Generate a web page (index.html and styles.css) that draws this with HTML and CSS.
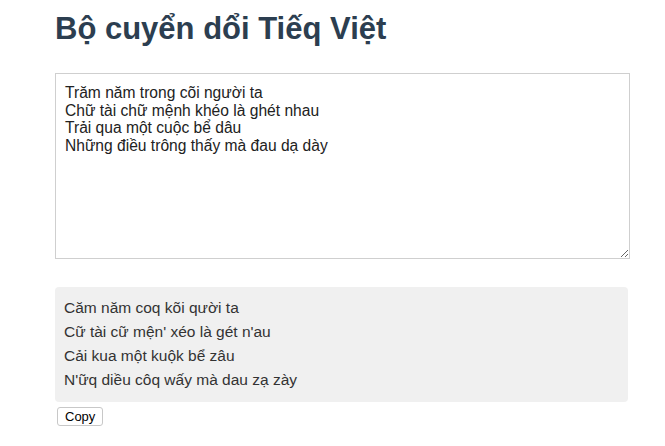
FILE: index.html
```html
<!DOCTYPE html>
<html lang="vi">
<head>
<meta charset="utf-8">
<title>Bộ cuyển dổi Tiếq Việt</title>
<link rel="stylesheet" href="styles.css">
</head>
<body>
<main class="page">
  <h1 class="title">Bộ cuyển dổi Tiếq Việt</h1>
  <textarea class="input" spellcheck="false">Trăm năm trong cõi người ta
Chữ tài chữ mệnh khéo là ghét nhau
Trải qua một cuộc bể dâu
Những điều trông thấy mà đau dạ dày</textarea>
  <div class="output">
    <p class="line">Căm năm coq kõi qười ta</p>
    <p class="line">Cữ tài cữ mện' xéo là gét n'au</p>
    <p class="line">Cải kua một kuộk bể zâu</p>
    <p class="line">N'ữq diều côq wấy mà dau zạ zày</p>
  </div>
  <button class="copy" type="button">Copy</button>
</main>
</body>
</html>
```
FILE: styles.css
```css
html, body {
  margin: 0;
  padding: 0;
  background: #fff;
}
body {
  font-family: "Liberation Sans", Arial, sans-serif;
}
.page {
  width: 575px;
  padding: 0 0 0 55px;
  display: flex;
  flex-direction: column;
  align-items: flex-start;
}
.title {
  margin: 10px 0 0 0;
  font-size: 31px;
  line-height: 38px;
  font-weight: bold;
  color: #2c3e50;
}
.input {
  box-sizing: border-box;
  width: 575px;
  height: 186px;
  margin-top: 25px;
  padding: 10px 9px;
  border: 1px solid #cfcfcf;
  font-family: "Liberation Sans", Arial, sans-serif;
  font-size: 15.6px;
  line-height: 17.5px;
  color: #222;
  resize: vertical;
  outline: none;
}
.output {
  box-sizing: border-box;
  width: 573px;
  margin-top: 28px;
  padding: 9px 9px 10px;
  background: #f0f0f0;
  border-radius: 4px;
  color: #333;
  font-size: 15.5px;
}
.line {
  margin: 0;
  line-height: 24px;
}
.copy {
  margin: 5px 0 0 2px;
  padding: 1px 7px;
  height: 19px;
  font-family: "Liberation Sans", Arial, sans-serif;
  font-size: 13px;
  color: #000;
  background: #fff;
  border: 1px solid #c8c8c8;
  border-radius: 3px;
}
```
